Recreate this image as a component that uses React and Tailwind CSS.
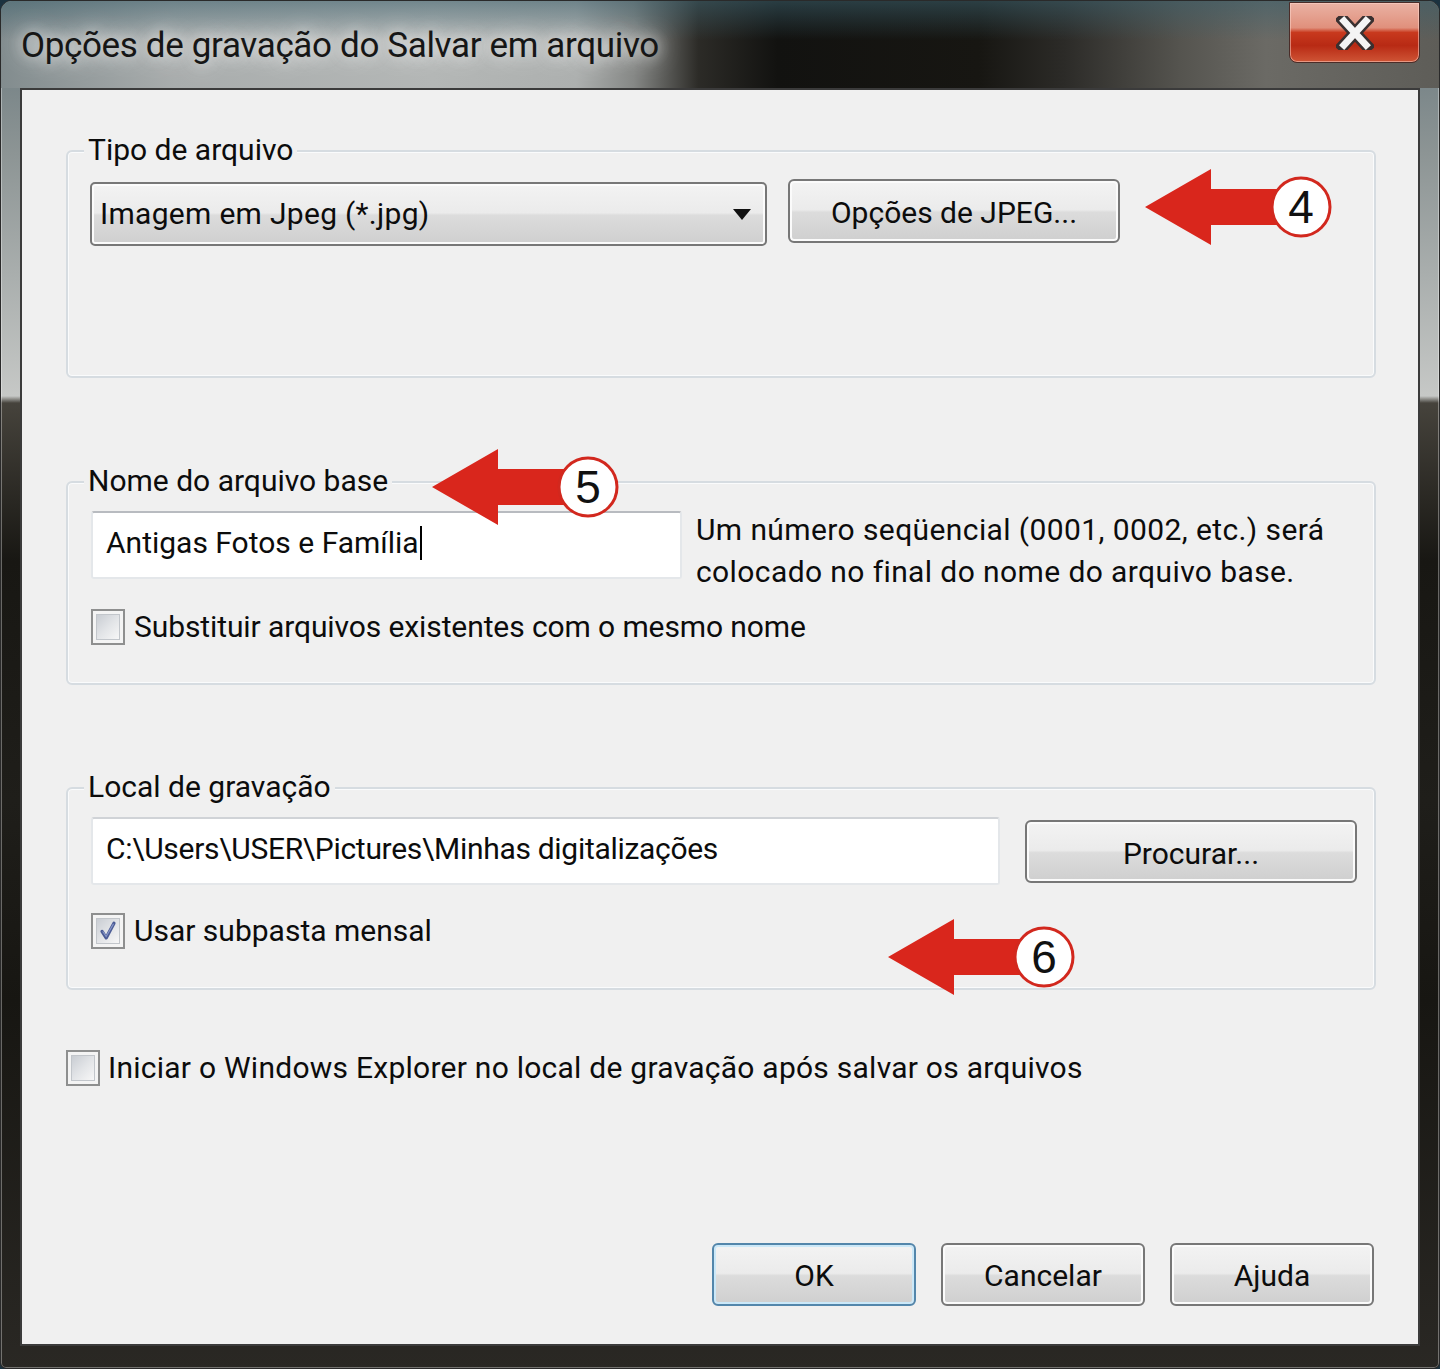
import React from "react";

function Checkbox({ checked = false }) {
  return (
    <div className="w-[34px] h-[36px] shrink-0 border-2 border-[#8e8f8f] bg-[#f4f4f4] p-[3px]">
      <div className="relative w-full h-full border border-[#c2c6cb] bg-[linear-gradient(135deg,#c9cdd3_0%,#e2e4e7_50%,#f7f7f7_100%)]">
        {checked && (
          <svg viewBox="0 0 24 24" className="absolute inset-0 w-full h-full">
            <path d="M5.5 12.5 L10 19.5 L18.5 3.5" fill="none" stroke="#4b5c96" strokeWidth="3.6" strokeLinejoin="round" strokeLinecap="round" />
            <path d="M6.5 12.8 L10 18 L17.8 4.5" fill="none" stroke="#8796c8" strokeWidth="1.2" strokeLinecap="round" />
          </svg>
        )}
      </div>
    </div>
  );
}

function Btn({ children, className = "", def = false }) {
  return (
    <div
      className={
        "flex items-center justify-center rounded-[6px] border-2 bg-[linear-gradient(to_bottom,#f3f3f3_0%,#ebebeb_48%,#dcdcdc_52%,#cfcfcf_100%)] text-[30px] leading-none text-[#0c0c0c] " +
        (def
          ? "border-[#5386ab] shadow-[inset_0_0_0_2px_#cbe8f8] "
          : "border-[#777777] shadow-[inset_0_0_0_2px_#fbfbfb] ") +
        className
      }
    >
      {children}
    </div>
  );
}

function Callout({ className, n }) {
  return (
    <svg width="190" height="76" viewBox="0 0 190 76" className={"absolute " + className}>
      <polygon points="0,38 66,0 66,20 150,20 150,56 66,56 66,76" fill="#d9261c" />
      <circle cx="156" cy="38" r="29" fill="#ffffff" stroke="#d2281e" strokeWidth="3" />
      <text x="156" y="54" textAnchor="middle" fontFamily="'Liberation Sans', Arial, sans-serif" fontSize="46" fill="#111">
        {n}
      </text>
    </svg>
  );
}

function Group({ className = "", legend, children }) {
  return (
    <div className={"relative mx-[44px] mr-[42px] rounded-[6px] border-2 border-[#d6dce1] shadow-[inset_0_0_0_1px_#fafbfc] " + className}>
      <span className="absolute left-[16px] top-[-20px] bg-[#f0f0f0] px-[4px] text-[30px] leading-[36px] text-[#0c0c0c]">
        {legend}
      </span>
      {children}
    </div>
  );
}

export default function App() {
  return (
    <div className="relative w-[1440px] h-[1369px] bg-[#1b3240] font-['Roboto',sans-serif] text-[#0c0c0c] overflow-hidden">
      <div className="flex flex-col w-full h-full rounded-t-[12px] rounded-b-[6px] border border-[#2a2a2a] shadow-[inset_0_0_0_1px_rgba(255,255,255,0.35)] bg-[linear-gradient(to_bottom,#66767c_0px,#8c9494_150px,#c6c8c6_395px,#46433c_402px,#181713_560px,#1f1e1a_800px,#171612_1000px,#2a2824_1369px)] overflow-hidden">
        {/* Title bar */}
        <div className="relative flex items-start h-[87px] shrink-0 bg-[linear-gradient(to_bottom,rgba(60,96,108,0.55)_0%,rgba(60,96,108,0)_45%),linear-gradient(to_right,#828c8e_0%,#a9adad_12%,#b4b7b6_30%,#adb0af_40%,#868886_44%,#2c2b27_48.5%,#121210_54%,#171612_68%,#2c2b28_74%,#55544f_82%,#6b6a65_88%,#5e5d58_100%)]">
          <div className="pl-[20px] pt-[23px] text-[35px] leading-[44px] tracking-[-0.35px] text-[#161616] whitespace-nowrap [text-shadow:0_0_14px_#e8eaea,0_0_24px_#e0e2e2]">
            Opções de gravação do Salvar em arquivo
          </div>
          <div className="ml-auto mr-[19px] mt-[1px] w-[131px] h-[61px] rounded-b-[8px] border border-[#4a2c28] shadow-[inset_0_0_0_1px_rgba(255,220,210,0.5)] bg-[linear-gradient(to_bottom,#eab2a4_0%,#e0907c_42%,#c8391e_50%,#b82a14_72%,#cf5536_100%)] flex items-center justify-center">
            <svg width="38" height="34" viewBox="0 0 38 34">
              <path d="M7 4 L31 30 M31 4 L7 30" stroke="#3a3030" strokeWidth="12" strokeLinecap="square" />
              <path d="M8 5 L30 29 M30 5 L8 29" stroke="#f4f4f4" strokeWidth="7" strokeLinecap="square" />
            </svg>
          </div>
        </div>

        {/* Client area */}
        <div className="mx-[19px] h-[1258px] shrink-0 border-2 border-[#3b3b3b] bg-[#f0f0f0] flex flex-col">
          {/* Group 1 */}
          <Group legend="Tipo de arquivo" className="mt-[60px] h-[228px]">
            <div className="flex items-start pt-[27px] pl-[22px]">
              <div className="mt-[3px] w-[677px] h-[64px] rounded-[5px] border-2 border-[#777777] shadow-[inset_0_0_0_2px_#fbfbfb] bg-[linear-gradient(to_bottom,#f3f3f3_0%,#ebebeb_48%,#dcdcdc_52%,#cfcfcf_100%)] flex items-center pl-[8px] pr-[14px]">
                <span className="text-[30px] leading-none tracking-[0.3px]">Imagem em Jpeg (*.jpg)</span>
                <svg width="18" height="11" viewBox="0 0 18 11" className="ml-auto">
                  <polygon points="0,0 18,0 9,11" fill="#111" />
                </svg>
              </div>
              <Btn className="ml-[21px] w-[332px] h-[64px] pt-[3px]">Opções de JPEG...</Btn>
            </div>
          </Group>

          {/* Group 2 */}
          <Group legend="Nome do arquivo base" className="mt-[103px] h-[204px]">
            <div className="pt-[28px] pl-[23px]">
              <div className="flex items-start h-[68px]">
                <div className="w-[591px] h-[68px] rounded-[3px] bg-white border-2 border-[#e4e7ea] border-t-[#b8bbc0] flex items-center pl-[13px] pb-[4px]">
                  <span className="text-[30px] leading-none">Antigas Fotos e Família</span>
                  <span className="ml-[1px] w-[2px] h-[34px] bg-black" />
                </div>
                <div className="ml-[14px] -mt-[2px] text-[30px] leading-[42px] tracking-[0.4px] whitespace-nowrap">
                  Um número seqüencial (0001, 0002, etc.) será
                  <br />
                  colocado no final do nome do arquivo base.
                </div>
              </div>
              <div className="mt-[30px] flex items-center gap-[9px]">
                <Checkbox />
                <span className="text-[30px] leading-none tracking-[-0.1px]">Substituir arquivos existentes com o mesmo nome</span>
              </div>
            </div>
          </Group>

          {/* Group 3 */}
          <Group legend="Local de gravação" className="mt-[102px] h-[203px]">
            <div className="pt-[28px] pl-[23px]">
              <div className="flex items-start">
                <div className="w-[909px] h-[68px] rounded-[3px] bg-white border-2 border-[#e4e7ea] border-t-[#d0d3d7] flex items-center pl-[13px] pb-[4px]">
                  <span className="text-[30px] leading-none tracking-[-0.3px]">C:\Users\USER\Pictures\Minhas digitalizações</span>
                </div>
                <Btn className="ml-[25px] mt-[3px] w-[332px] h-[63px] pt-[4px]">Procurar...</Btn>
              </div>
              <div className="mt-[28px] flex items-center gap-[9px]">
                <Checkbox checked />
                <span className="text-[30px] leading-none">Usar subpasta mensal</span>
              </div>
            </div>
          </Group>

          {/* Bottom checkbox */}
          <div className="mt-[60px] ml-[44px] flex items-center gap-[8px]">
            <Checkbox />
            <span className="text-[30px] leading-none tracking-[0.25px]">Iniciar o Windows Explorer no local de gravação após salvar os arquivos</span>
          </div>

          {/* Buttons */}
          <div className="mt-auto mb-[38px] mr-[44px] flex justify-end gap-[25px]">
            <Btn def className="w-[204px] h-[63px] pt-[2px]">OK</Btn>
            <Btn className="w-[204px] h-[63px] pt-[2px]">Cancelar</Btn>
            <Btn className="w-[204px] h-[63px] pt-[2px]">Ajuda</Btn>
          </div>
        </div>
      </div>

      {/* Annotation callouts */}
      <Callout className="left-[1145px] top-[169px]" n="4" />
      <Callout className="left-[432px] top-[449px]" n="5" />
      <Callout className="left-[888px] top-[919px]" n="6" />
    </div>
  );
}
